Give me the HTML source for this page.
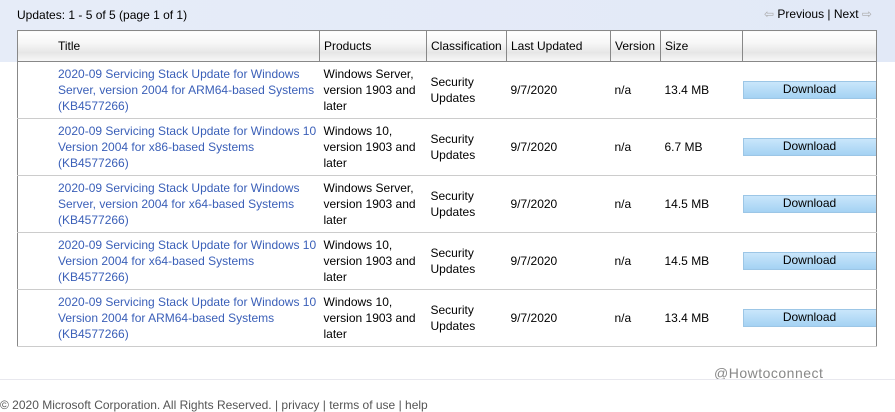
<!DOCTYPE html>
<html><head><style>
body{margin:0;width:895px;height:401px;overflow:hidden;background:#fff;font-family:"Liberation Sans",sans-serif;font-size:12px;color:#000;position:relative}
.top{position:absolute;left:0;top:0;width:895px;height:62px;background:linear-gradient(90deg,#e6ecf8,#e2e9f7)}
.upd{position:absolute;left:17px;top:8px}
.nav{position:absolute;left:764px;top:7px}
table{position:absolute;left:17px;top:30px;border-collapse:collapse;width:860px;table-layout:fixed;background:#fff;border:1px solid #888}
th{height:30px;font-weight:normal;text-align:left;border-left:1px solid #888;border-bottom:1px solid #888;background:linear-gradient(#fff 0%,#f6f6f6 40%,#e6e6e6 70%,#f8f8f8 100%);padding:0 4px;vertical-align:middle;white-space:nowrap;overflow:hidden}
th:first-child{border-left:none;padding-left:40px}
td{height:56px;border-bottom:1px solid #ccc;padding:0 4px;vertical-align:middle;line-height:16px}
td:first-child{padding-left:40px;padding-right:0;color:#3a5fb8}
td.d{padding:0}
.btn{display:block;width:132px;height:16px;line-height:15px;text-align:center;background:linear-gradient(#c9e6fb,#a4d2f3);border:1px solid #9cc6e6}
.wm{position:absolute;left:714px;top:365px;color:#888;font-size:14px;letter-spacing:.5px}
.hr{position:absolute;left:0;top:379px;width:895px;height:1px;background:#e8e8ee}
.cp{position:absolute;left:0;top:398px;font-size:12px;color:#555}
</style></head><body>
<div class="top"></div>
<div class="upd">Updates: 1 - 5 of 5 (page 1 of 1)</div>
<div class="nav"><span style="color:#aaa">⇦</span> Previous | Next <span style="color:#aaa">⇨</span></div>
<table>
<colgroup><col style="width:302px"><col style="width:107px"><col style="width:80px"><col style="width:104px"><col style="width:50px"><col style="width:82px"><col></colgroup>
<tr><th>Title</th><th>Products</th><th>Classification</th><th>Last Updated</th><th>Version</th><th>Size</th><th></th></tr>
<tr><td>2020-09 Servicing Stack Update for Windows<br>Server, version 2004 for ARM64-based Systems<br>(KB4577266)</td><td>Windows Server, version 1903 and later</td><td>Security Updates</td><td>9/7/2020</td><td>n/a</td><td>13.4 MB</td><td class="d"><span class="btn">Download</span></td></tr>
<tr><td>2020-09 Servicing Stack Update for Windows 10<br>Version 2004 for x86-based Systems<br>(KB4577266)</td><td>Windows 10, version 1903 and later</td><td>Security Updates</td><td>9/7/2020</td><td>n/a</td><td>6.7 MB</td><td class="d"><span class="btn">Download</span></td></tr>
<tr><td>2020-09 Servicing Stack Update for Windows<br>Server, version 2004 for x64-based Systems<br>(KB4577266)</td><td>Windows Server, version 1903 and later</td><td>Security Updates</td><td>9/7/2020</td><td>n/a</td><td>14.5 MB</td><td class="d"><span class="btn">Download</span></td></tr>
<tr><td>2020-09 Servicing Stack Update for Windows 10<br>Version 2004 for x64-based Systems<br>(KB4577266)</td><td>Windows 10, version 1903 and later</td><td>Security Updates</td><td>9/7/2020</td><td>n/a</td><td>14.5 MB</td><td class="d"><span class="btn">Download</span></td></tr>
<tr><td>2020-09 Servicing Stack Update for Windows 10<br>Version 2004 for ARM64-based Systems<br>(KB4577266)</td><td>Windows 10, version 1903 and later</td><td>Security Updates</td><td>9/7/2020</td><td>n/a</td><td>13.4 MB</td><td class="d"><span class="btn">Download</span></td></tr>
</table>
<div class="wm">@Howtoconnect</div>
<div class="hr"></div>
<div class="cp">© 2020 Microsoft Corporation. All Rights Reserved. | privacy | terms of use | help</div>
</body></html>
